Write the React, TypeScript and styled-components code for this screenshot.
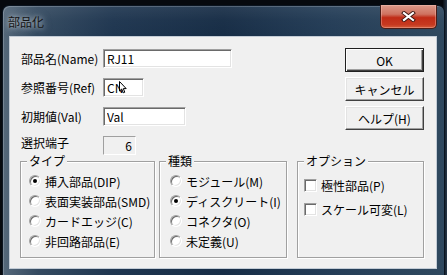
import React from 'react';
import styled, { createGlobalStyle } from 'styled-components';

const GlobalStyle = createGlobalStyle`
  html, body {
    margin: 0;
    padding: 0;
    background: #06090e;
  }
  * { box-sizing: border-box; }
`;

const font = `"Noto Sans CJK JP", "Liberation Sans", sans-serif`;

const Screen = styled.div`
  width: 447px;
  height: 275px;
  overflow: hidden;
  padding: 5px 2px 0;
  display: flex;
  background: linear-gradient(90deg, #06090e 0%, #06090e 99%, #27384a 100%);
`;

const Frame = styled.div`
  flex: 1;
  display: flex;
  flex-direction: column;
  border: 1px solid #0a1420;
  border-bottom: none;
  border-radius: 7px 7px 0 0;
  padding: 0 7px 6px 6px;
  background:
    linear-gradient(180deg, rgba(255,255,255,0.08) 0px, rgba(255,255,255,0.02) 14px, rgba(0,0,0,0) 30px),
    linear-gradient(90deg, #55687a 0px, #344a60 35px, #1f3650 110px, #172d46 220px, #243d57 330px, #30495f 447px);
  box-shadow: inset 1px 1px 0 rgba(255,255,255,0.2);
`;

const TitleBar = styled.div`
  height: 30px;
  display: flex;
  align-items: center;
`;

const Title = styled.div`
  margin-left: -1px;
  font-family: ${font};
  font-size: 12px;
  color: #151515;
  text-shadow: 0 0 5px rgba(220,228,236,0.85), 0 0 9px rgba(190,200,212,0.6);
`;

const CloseButton = styled.div`
  margin-left: auto;
  align-self: flex-start;
  margin-top: -1px;
  width: 57px;
  height: 24px;
  display: flex;
  align-items: center;
  justify-content: center;
  border: 1px solid #4a1c16;
  border-top: none;
  border-radius: 0 0 5px 5px;
  background: linear-gradient(180deg, #dc9a8a 0%, #cf7260 40%, #c02c17 55%, #c63920 85%, #d45c3a 100%);
  box-shadow: inset 0 0 0 1px rgba(255,210,200,0.35);
`;

const Client = styled.div`
  flex: 1;
  display: flex;
  flex-direction: column;
  background: #f0f0f0;
  border: 1px solid #c3ccd6;
  font-family: ${font};
  font-size: 12px;
  color: #000;
`;

const TopSection = styled.div`
  height: 117px;
  padding: 11px 12px 0 11px;
  display: flex;
  justify-content: space-between;
  align-items: flex-start;
`;

const FormGrid = styled.div`
  margin-top: 1px;
  display: grid;
  grid-template-columns: 82px auto;
  grid-auto-rows: 19px;
  row-gap: 10px;
  align-items: center;
`;

const Label = styled.div<{ $top?: boolean }>`
  line-height: ${p => (p.$top ? '14px' : '19px')};
  align-self: ${p => (p.$top ? 'start' : 'center')};
  white-space: nowrap;
`;

const FieldWrap = styled.div`
  position: relative;
  width: fit-content;
`;

const Edit = styled.input<{ $w: number }>`
  display: block;
  width: ${p => p.$w}px;
  height: 19px;
  margin: 0;
  padding: 0 0 0 3px;
  font-family: ${font};
  font-size: 12px;
  color: #000;
  background: #fff;
  border: 1px solid;
  border-color: #a0a0a0 #fff #fff #a0a0a0;
  box-shadow: inset 1px 1px 0 #6a6a6a, inset -1px -1px 0 #e3e3e3;
  outline: none;
`;

const StaticBox = styled.div`
  width: 33px;
  height: 19px;
  padding-right: 3px;
  text-align: right;
  line-height: 18px;
  border: 1px solid;
  border-color: #a0a0a0 #fff #fff #a0a0a0;
`;

const Cursor = styled.svg`
  position: absolute;
  left: 16px;
  top: 3px;
`;

const ButtonColumn = styled.div`
  display: flex;
  flex-direction: column;
  gap: 5px;
`;

const Button = styled.div<{ $default?: boolean }>`
  width: 79px;
  height: 24px;
  display: flex;
  align-items: center;
  justify-content: center;
  background: #f0f0f0;
  border: 1px solid;
  border-color: ${p => (p.$default ? '#202020' : '#fff #404040 #404040 #fff')};
  box-shadow: ${p =>
    p.$default
      ? 'inset 1px 1px 0 #fff, inset -1px -1px 0 #404040, inset -2px -2px 0 #a0a0a0'
      : 'inset -1px -1px 0 #a0a0a0, inset 1px 1px 0 #e3e3e3'};
`;

const GroupRow = styled.div`
  display: flex;
  padding-left: 10px;
  gap: 4px;
`;

const Group = styled.fieldset<{ $w: number; $ml?: number; $pt: number; $pl: number }>`
  width: ${p => p.$w}px;
  height: 104px;
  margin: 0 0 0 ${p => p.$ml ?? 0}px;
  padding: ${p => p.$pt}px 0 0 ${p => p.$pl}px;
  border: 1px solid #a0a0a0;
  box-shadow: inset 1px 1px 0 #fff, 1px 1px 0 #fff;
  min-width: 0;
`;

// the fieldset's own left padding also moves the legend, so pull it back
const Legend = styled.legend<{ $pl: number }>`
  margin-left: ${p => 6 - p.$pl}px;
  padding: 0 2px;
  line-height: 14px;
  background: #f0f0f0;
`;

const OptionRow = styled.div<{ $h: number }>`
  height: ${p => p.$h}px;
  display: flex;
  align-items: center;
  white-space: nowrap;
`;

const OptionList = styled.div<{ $gap: number }>`
  display: flex;
  flex-direction: column;
  gap: ${p => p.$gap}px;
`;

const Radio = styled.span<{ $on?: boolean }>`
  position: relative;
  flex: none;
  width: 12px;
  height: 12px;
  margin-right: 4px;
  border-radius: 50%;
  background: #fff;
  border: 1px solid;
  border-color: #a0a0a0 #fff #fff #a0a0a0;
  box-shadow: inset 1px 1px 0 #6a6a6a, inset -1px -1px 0 #e3e3e3;
  &::after {
    content: '';
    display: ${p => (p.$on ? 'block' : 'none')};
    position: absolute;
    left: 3px;
    top: 3px;
    width: 4px;
    height: 4px;
    border-radius: 50%;
    background: #000;
  }
`;

const Check = styled.span`
  flex: none;
  width: 13px;
  height: 13px;
  margin-right: 4px;
  background: #fff;
  border: 1px solid;
  border-color: #a0a0a0 #fff #fff #a0a0a0;
  box-shadow: inset 1px 1px 0 #6a6a6a, inset -1px -1px 0 #e3e3e3;
`;

const types = [
  { label: '挿入部品(DIP)', on: true },
  { label: '表面実装部品(SMD)', on: false },
  { label: 'カードエッジ(C)', on: false },
  { label: '非回路部品(E)', on: false },
];

const kinds = [
  { label: 'モジュール(M)', on: false },
  { label: 'ディスクリート(I)', on: true },
  { label: 'コネクタ(O)', on: false },
  { label: '未定義(U)', on: false },
];

const options = ['極性部品(P)', 'スケール可変(L)'];

export default function App() {
  return (
    <>
      <GlobalStyle />
      <Screen>
        <Frame>
          <TitleBar>
            <Title>部品化</Title>
            <CloseButton>
              <svg width="15" height="11" viewBox="0 0 15 11">
                <path d="M3 2 L12 9 M12 2 L3 9" stroke="#3a1410" strokeWidth="4" strokeLinecap="square" />
                <path d="M3 2 L12 9 M12 2 L3 9" stroke="#fff" strokeWidth="2.2" strokeLinecap="square" />
              </svg>
            </CloseButton>
          </TitleBar>
          <Client>
            <TopSection>
              <FormGrid>
                <Label>部品名(Name)</Label>
                <Edit $w={129} readOnly value="RJ11" />
                <Label>参照番号(Ref)</Label>
                <FieldWrap>
                  <Edit $w={41} readOnly value="CN" />
                  <Cursor width="8" height="13" viewBox="0 0 8 13">
                    <path d="M0.5 0.5 L0.5 10 L2.7 8 L4.3 11.8 L5.8 11.2 L4.3 7.6 L7.2 7.6 Z" fill="#fff" stroke="#000" strokeWidth="1" />
                  </Cursor>
                </FieldWrap>
                <Label>初期値(Val)</Label>
                <Edit $w={83} readOnly value="Val" />
                <Label $top>選択端子</Label>
                <StaticBox>6</StaticBox>
              </FormGrid>
              <ButtonColumn>
                <Button $default>OK</Button>
                <Button>キャンセル</Button>
                <Button>ヘルプ(H)</Button>
              </ButtonColumn>
            </TopSection>
            <GroupRow>
              <Group $w={135} $pt={3} $pl={8}>
                <Legend $pl={8}>タイプ</Legend>
                <OptionList $gap={0}>
                  {types.map(t => (
                    <OptionRow key={t.label} $h={20}>
                      <Radio $on={t.on} />
                      {t.label}
                    </OptionRow>
                  ))}
                </OptionList>
              </Group>
              <Group $w={128} $pt={3} $pl={10}>
                <Legend $pl={10}>種類</Legend>
                <OptionList $gap={0}>
                  {kinds.map(k => (
                    <OptionRow key={k.label} $h={20}>
                      <Radio $on={k.on} />
                      {k.label}
                    </OptionRow>
                  ))}
                </OptionList>
              </Group>
              <Group $w={127} $ml={6} $pt={9} $pl={6}>
                <Legend $pl={6}>オプション</Legend>
                <OptionList $gap={8}>
                  {options.map(o => (
                    <OptionRow key={o} $h={16}>
                      <Check />
                      {o}
                    </OptionRow>
                  ))}
                </OptionList>
              </Group>
            </GroupRow>
          </Client>
        </Frame>
      </Screen>
    </>
  );
}
